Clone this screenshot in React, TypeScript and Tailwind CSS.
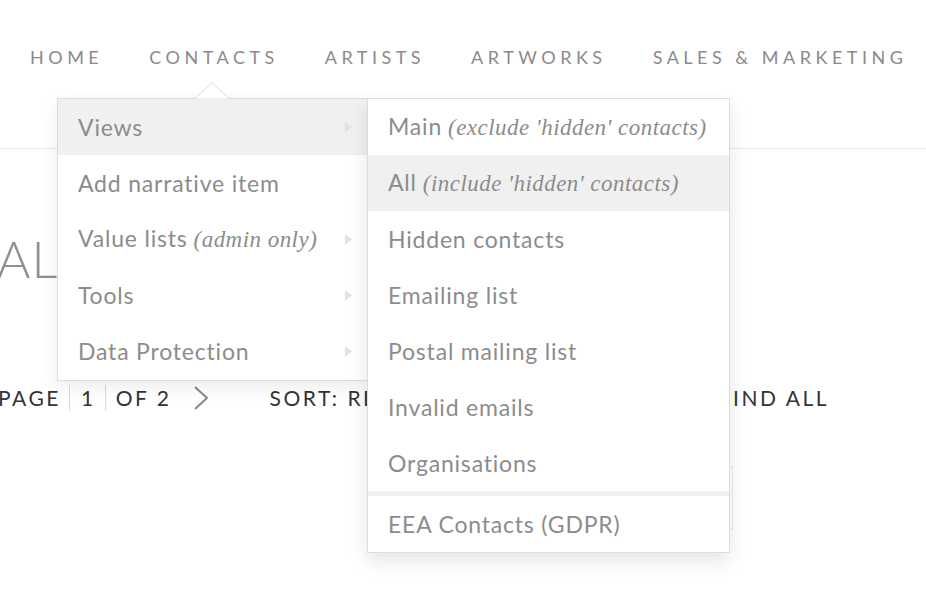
import React from "react";

type Item = { label: string; note?: string; arrow?: boolean; active?: boolean };

const nav = ["Home", "Contacts", "Artists", "Artworks", "Sales & Marketing"];

const mainMenu: Item[] = [
  { label: "Views", arrow: true, active: true },
  { label: "Add narrative item" },
  { label: "Value lists", note: "(admin only)", arrow: true },
  { label: "Tools", arrow: true },
  { label: "Data Protection", arrow: true },
];

const views: Item[] = [
  { label: "Main", note: "(exclude 'hidden' contacts)" },
  { label: "All", note: "(include 'hidden' contacts)", active: true },
  { label: "Hidden contacts" },
  { label: "Emailing list" },
  { label: "Postal mailing list" },
  { label: "Invalid emails" },
  { label: "Organisations" },
];

function Row({ item }: { item: Item }) {
  return (
    <div
      className={
        "flex h-[56px] items-center justify-between pl-[20px] pr-[15px] " +
        (item.active ? "bg-[#f0f0f0]" : "bg-white")
      }
    >
      <span className="whitespace-nowrap">
        {item.label}
        {item.note && (
          <span className="ml-[6px] font-['Liberation_Serif',serif] text-[23px] italic tracking-[0.02em]">
            {item.note}
          </span>
        )}
      </span>
      {item.arrow && (
        <svg width="7" height="11" viewBox="0 0 7 11" className="shrink-0">
          <path d="M0 0 L7 5.5 L0 11 Z" fill="#e2e2e2" />
        </svg>
      )}
    </div>
  );
}

export default function App() {
  return (
    <div className="relative min-h-[596px] overflow-hidden bg-white font-['Lato',sans-serif]">
      {/* top nav */}
      <header className="h-[149px] border-b border-[#e8e8e8]">
        <nav className="flex gap-[46px] pl-[30px] pt-[44px] text-[18px] uppercase tracking-[0.25em] text-[#8a8a8a]">
          {nav.map((n) => (
            <span key={n} className="whitespace-nowrap">
              {n}
            </span>
          ))}
        </nav>
      </header>

      {/* page body */}
      <main>
        <h1 className="mt-[84px] -ml-[3px] text-[51px] font-light leading-none tracking-[0.02em] text-[#8f8f8f]">
          ALL CONTACTS
        </h1>

        <div className="mt-[98px] flex items-center text-[21px] uppercase tracking-[0.12em] text-[#333]">
          <span className="-ml-[2px]">Page</span>
          <span className="ml-[8px] mr-[11px] h-[26px] w-px bg-[#d8d8d8]" />
          <span>1</span>
          <span className="ml-[9px] mr-[10px] h-[26px] w-px bg-[#d8d8d8]" />
          <span>Of 2</span>
          <svg width="16" height="26" viewBox="0 0 16 26" className="ml-[22px]">
            <path d="M2 2 L14 13 L2 24" fill="none" stroke="#888" strokeWidth="2" />
          </svg>
          <span className="ml-[60px]">Sort: Recent</span>
          <span className="ml-auto mr-[97px]">Find All</span>
        </div>

        <div className="ml-[500px] mt-[52px] h-[64px] w-[233px] border-y border-r border-[#ececec]" />
      </main>

      {/* dropdown caret */}
      <svg
        width="34"
        height="17"
        viewBox="0 0 34 17"
        className="absolute left-[195px] top-[82px] z-20"
      >
        <path d="M0 16.5 L17 0.5 L34 16.5" fill="white" stroke="#dcdcdc" strokeWidth="1" />
      </svg>

      {/* contacts dropdown */}
      <div className="absolute left-[57px] top-[98px] z-10 flex text-[23px] tracking-[0.035em] text-[#8c8c8c]">
        <div className="h-[283px] w-[311px] border border-[#dcdcdc] bg-white shadow-[0_6px_16px_rgba(0,0,0,0.08)]">
          {mainMenu.map((m) => (
            <Row key={m.label} item={m} />
          ))}
        </div>
        <div className="-ml-px w-[363px] border border-[#dcdcdc] bg-white shadow-[0_8px_18px_rgba(0,0,0,0.1)]">
          {views.map((v) => (
            <Row key={v.label} item={v} />
          ))}
          <div className="h-[5px] bg-[#f0f0f0]" />
          <Row item={{ label: "EEA Contacts (GDPR)" }} />
        </div>
      </div>
    </div>
  );
}
